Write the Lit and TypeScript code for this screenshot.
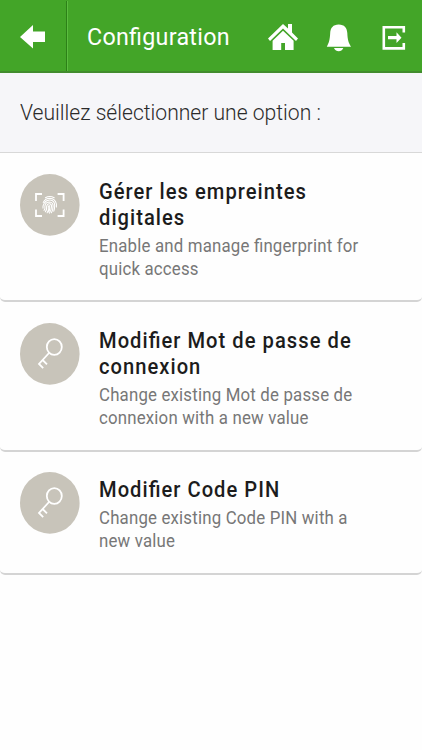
import { LitElement, html, css, svg } from "lit";
import { customElement } from "lit/decorators.js";

interface Option {
  icon: "finger" | "key";
  size: string;
  title: string[];
  text: string[];
}

const options: Option[] = [
  {
    icon: "finger",
    size: "first",
    title: ["Gérer les empreintes", "digitales"],
    text: ["Enable and manage fingerprint for", "quick access"],
  },
  {
    icon: "key",
    size: "middle",
    title: ["Modifier Mot de passe de", "connexion"],
    text: ["Change existing Mot de passe de", "connexion with a new value"],
  },
  {
    icon: "key",
    size: "short",
    title: ["Modifier Code PIN"],
    text: ["Change existing Code PIN with a", "new value"],
  },
];

const keyIcon = svg`
  <g fill="none" stroke="#fff" stroke-width="1.8">
    <ellipse cx="34.3" cy="24" rx="7.5" ry="7.9"/>
    <path d="M29 30L19 41L23.2 45.2M22.6 37L27 41.4"/>
  </g>`;

const fingerIcon = svg`
  <g fill="none" stroke="#fff" stroke-width="1.8">
    <path d="M22 20H16V27M37.6 20H43.6V27M16 35.5V42H22M43.6 35.5V42H37.6"/>
  </g>
  <g fill="none" stroke="#fff" stroke-width="1.05" stroke-linecap="round">
    <path d="M25.4 23.8Q29.6 21.2 34.2 23.8"/>
    <path d="M23.2 28.4Q25.4 24.3 29.8 24.3Q35.4 24.6 36.4 30.2V33"/>
    <path d="M23 34.2Q22.6 31.8 24.2 29.2Q26.4 26 30 26.1Q34.6 26.6 34.7 31.5Q34.7 34.6 33.8 37.2"/>
    <path d="M24 36.4Q25.4 34.8 24.9 32.4Q25.2 28 29.6 27.9Q33.2 28.3 33.1 32Q33 36 31.4 38.8"/>
    <path d="M25.3 37.8Q27 35.8 26.6 32.6Q27 29.6 29.6 29.7Q31.7 30 31.5 32.4Q31.3 36.6 29.4 39.2"/>
    <path d="M27.1 38.8Q29 36.6 28.3 33Q28.4 31.4 29.7 31.7Q30 35.8 28.7 38"/>
  </g>`;

@customElement("app-root")
export class AppRoot extends LitElement {
  static styles = css`
    :host {
      display: flex;
      flex-direction: column;
      height: 750px;
      background: #fefefe;
      font-family: Roboto, "Liberation Sans", sans-serif;
      font-feature-settings: "liga" 1;
      white-space: nowrap;
      overflow: hidden;
    }
    .bar {
      display: flex;
      box-sizing: border-box;
      height: 73px;
      background: #43a528;
      border-bottom: 2px solid #428c2e;
      color: #fff;
    }
    .back {
      box-sizing: border-box;
      width: 67px;
      margin-top: 1px;
      padding: 24px 0 0 20px;
      border-right: 1px solid #2d8018;
    }
    .rule {
      width: 1px;
      margin-top: 1px;
      background: #5bbd40;
    }
    .heading {
      width: 181px;
      padding-left: 19px;
      font-size: 24.5px;
      line-height: 74px;
      letter-spacing: 0.3px;
    }
    .heading span,
    .prompt span,
    .title,
    .text {
      display: inline-block;
      transform-origin: 0 0;
    }
    .heading span {
      transform: scaleX(0.949);
    }
    .prompt span {
      transform: scaleX(0.938);
    }
    .actions {
      display: flex;
      padding-top: 23px;
    }
    svg {
      display: block;
      flex: none;
    }
    .prompt {
      box-sizing: border-box;
      height: 80px;
      padding-left: 20px;
      background: #f6f6f9;
      border-bottom: 1px solid #d8d8d8;
      color: #2b2b2b;
      font-size: 22.5px;
      font-weight: 300;
      line-height: 78px;
    }
    .card {
      display: flex;
      box-sizing: border-box;
      gap: 19px;
      padding: 21px 20px 0;
      border-bottom: 2px solid #d4d4d4;
      border-radius: 0 0 5px 5px;
    }
    .first {
      height: 149px;
    }
    .middle {
      height: 150px;
    }
    .short {
      height: 123px;
      padding-top: 20px;
    }
    .copy {
      display: flex;
      flex-direction: column;
      align-items: flex-start;
      padding-top: 5px;
    }
    .title {
      color: #1c1c1c;
      font-size: 21.5px;
      font-weight: 500;
      line-height: 26px;
      letter-spacing: 1.1px;
      transform: scaleX(0.937);
    }
    .text {
      padding-top: 3px;
      color: #777;
      font-size: 18.3px;
      line-height: 23.3px;
      letter-spacing: 0.2px;
      transform: scaleX(0.92);
    }
  `;

  render() {
    return html`
      <header class="bar">
        <div class="back">
          <svg width="26" height="24" viewBox="0 0 26 24">
            <path d="M0 12L13 0V6.5H25V17H13V23.5Z" fill="#fff" />
          </svg>
        </div>
        <div class="rule"></div>
        <div class="heading"><span>Configuration</span></div>
        <div class="actions">
          <svg width="154" height="30" viewBox="268 23 154 30">
            <g fill="#fff">
              <path d="M283 24L288 28.6V24H292V32.5L298 38.5L296 41L283 28.6L270 41L268 38.5Z" />
              <path d="M283 30.8L293.6 40.8V50H285V43H281.2V50H272.6V40.8Z" />
              <path d="M338.7 24.5C344.5 24.5 347 28 347.3 33C347.6 40 348.5 42.5 351 46.8H326.8C329 42.5 329.8 40 330.2 33C330.5 28 333 24.5 338.7 24.5Z" />
              <path d="M334 48H343.3Q341.8 51.3 338.7 51.3Q335.6 51.3 334 48Z" />
              <path d="M388 36H396.5V32.2L401.5 37.7L396.5 43V39.3H388Z" />
            </g>
            <path d="M403.8 32.5V27.2H383.8V48.4H403.8V43" fill="none" stroke="#fff" stroke-width="2.6" />
          </svg>
        </div>
      </header>
      <div class="prompt"><span>Veuillez sélectionner une option :</span></div>
      ${options.map(
        (o) => html`
          <section class="card ${o.size}">
            <svg width="60" height="62" viewBox="0 0 60 62">
              <ellipse cx="29.8" cy="30.9" rx="29.8" ry="30.8" fill="#c8c4ba" />
              ${o.icon === "key" ? keyIcon : fingerIcon}
            </svg>
            <div class="copy">
              ${o.title.map((t) => html`<div class="title">${t}</div>`)}
              <div class="text">${o.text.map((t) => html`<div>${t}</div>`)}</div>
            </div>
          </section>
        `
      )}
    `;
  }
}
